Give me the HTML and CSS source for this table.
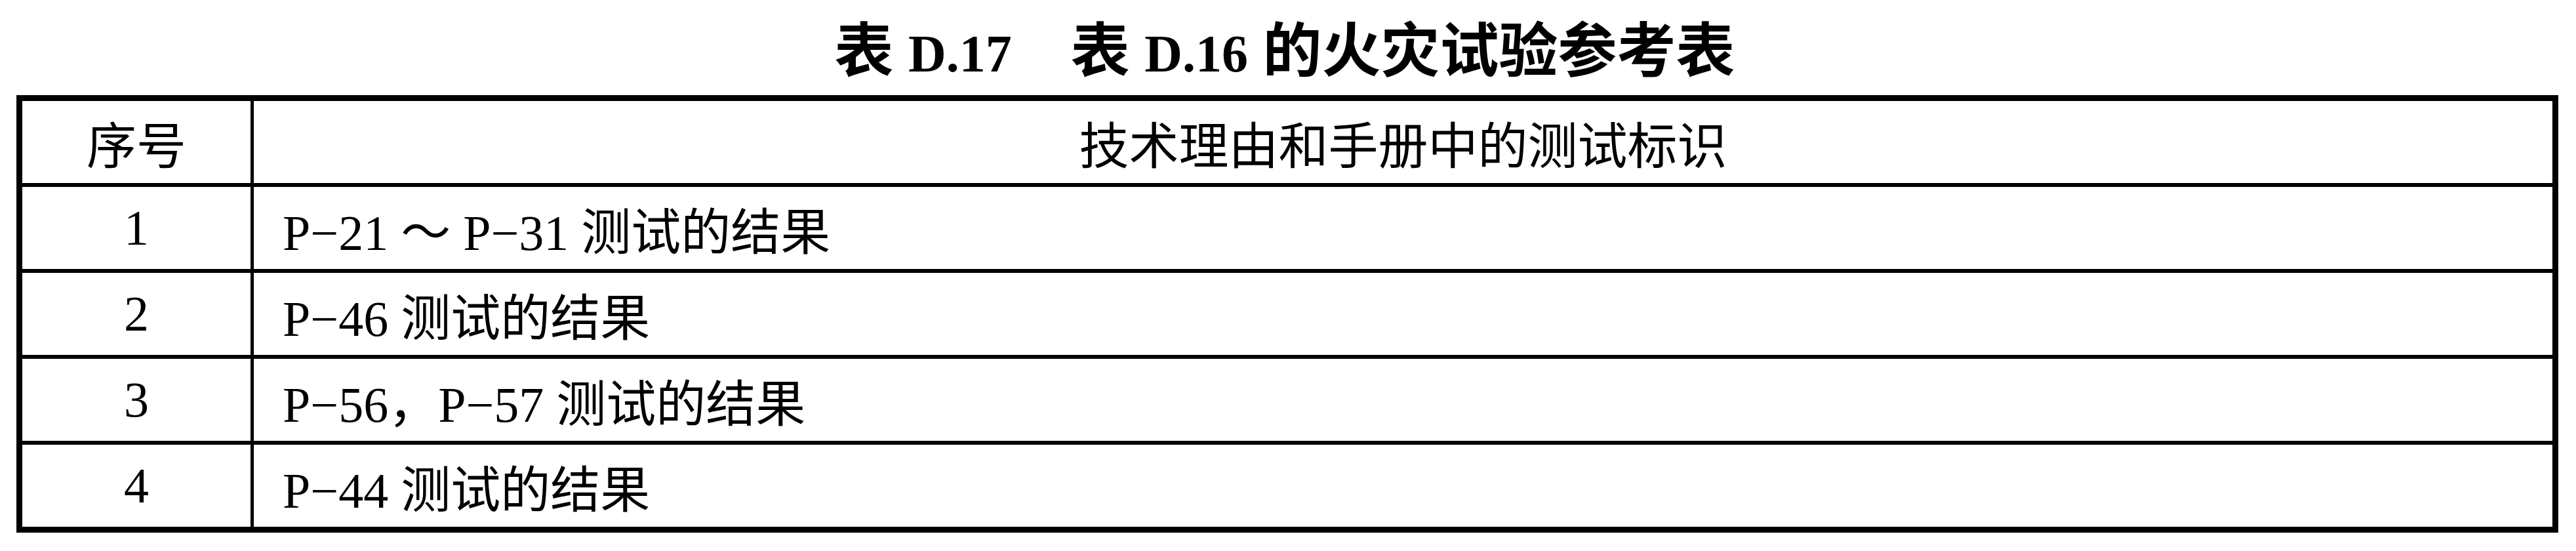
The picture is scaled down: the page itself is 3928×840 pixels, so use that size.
FILE: index.html
```html
<!DOCTYPE html>
<html lang="zh-CN">
<head>
<meta charset="utf-8">
<title>表 D.17</title>
<link rel="stylesheet" href="styles.css">
</head>
<body>
<h1 class="title">表 <span class="lat">D.17</span>　表 <span class="lat">D.16</span> 的火灾试验参考表</h1>
<div class="table">
  <div class="row head">
    <div class="c1">序号</div>
    <div class="c2 center">技术理由和手册中的测试标识</div>
  </div>
  <div class="row">
    <div class="c1">1</div>
    <div class="c2">P−21 ～ P−31 测试的结果</div>
  </div>
  <div class="row">
    <div class="c1">2</div>
    <div class="c2">P−46 测试的结果</div>
  </div>
  <div class="row">
    <div class="c1">3</div>
    <div class="c2">P−56，P−57 测试的结果</div>
  </div>
  <div class="row">
    <div class="c1">4</div>
    <div class="c2">P−44 测试的结果</div>
  </div>
</div>
</body>
</html>
```
FILE: styles.css
```css
html, body {
  margin: 0;
  padding: 0;
  background: #fff;
}
body {
  width: 3928px;
  height: 840px;
  overflow: hidden;
  color: #000;
  font-family: "Liberation Serif", "Noto Sans CJK SC", serif;
}
.title {
  margin: 0;
  height: 145px;
  line-height: 158px;
  text-align: center;
  font-family: "Liberation Serif", "Noto Sans CJK SC", sans-serif;
  font-weight: 700;
  font-size: 90px;
  white-space: pre;
  padding-right: 10px;
}
.title .lat {
  font-size: 80px;
}
.table {
  margin-left: 25px;
  width: 3876px;
  box-sizing: border-box;
  border: 9px solid #000;
  font-size: 76px;
}
.row {
  display: grid;
  grid-template-columns: 353px 1fr;
  height: 125px;
  border-bottom: 6px solid #000;
}
.row:last-child {
  border-bottom: 0;
}
.c1 {
  border-right: 5px solid #000;
  display: flex;
  align-items: center;
  justify-content: center;
  white-space: nowrap;
}
.c2 {
  display: flex;
  align-items: center;
  padding-left: 44px;
  white-space: pre;
}
.c2.center {
  justify-content: center;
  padding-left: 0;
}
```
